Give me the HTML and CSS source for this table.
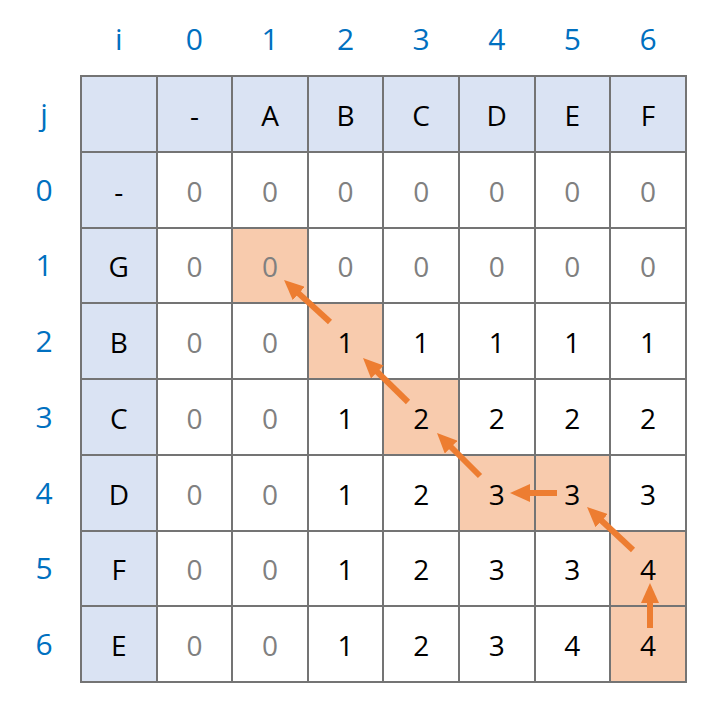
FILE: index.html
```html
<!DOCTYPE html>
<html>
<head>
<meta charset="utf-8">
<link rel="stylesheet" href="styles.css">
</head>
<body>
<div class="page">
  <div class="corner"></div>
  <div class="top-labels">
    <span>i</span><span>0</span><span>1</span><span>2</span><span>3</span><span>4</span><span>5</span><span>6</span>
  </div>
  <div class="left-labels">
    <span>j</span><span>0</span><span>1</span><span>2</span><span>3</span><span>4</span><span>5</span><span>6</span>
  </div>
  <div class="table">
    <div class="c h"></div><div class="c h">-</div><div class="c h">A</div><div class="c h">B</div><div class="c h">C</div><div class="c h">D</div><div class="c h">E</div><div class="c h">F</div>

    <div class="c h">-</div><div class="c g">0</div><div class="c g">0</div><div class="c g">0</div><div class="c g">0</div><div class="c g">0</div><div class="c g">0</div><div class="c g">0</div>

    <div class="c h">G</div><div class="c g">0</div><div class="c g p">0</div><div class="c g">0</div><div class="c g">0</div><div class="c g">0</div><div class="c g">0</div><div class="c g">0</div>

    <div class="c h">B</div><div class="c g">0</div><div class="c g">0</div><div class="c p">1</div><div class="c">1</div><div class="c">1</div><div class="c">1</div><div class="c">1</div>

    <div class="c h">C</div><div class="c g">0</div><div class="c g">0</div><div class="c">1</div><div class="c p">2</div><div class="c">2</div><div class="c">2</div><div class="c">2</div>

    <div class="c h">D</div><div class="c g">0</div><div class="c g">0</div><div class="c">1</div><div class="c">2</div><div class="c p">3</div><div class="c p">3</div><div class="c">3</div>

    <div class="c h">F</div><div class="c g">0</div><div class="c g">0</div><div class="c">1</div><div class="c">2</div><div class="c">3</div><div class="c">3</div><div class="c p">4</div>

    <div class="c h">E</div><div class="c g">0</div><div class="c g">0</div><div class="c">1</div><div class="c">2</div><div class="c">3</div><div class="c">4</div><div class="c p">4</div>
  </div>
</div>
<svg class="arrows" width="714" height="706" viewBox="0 0 714 706">
  <defs>
    <marker id="head" viewBox="0 0 20 18" markerWidth="20" markerHeight="18" markerUnits="userSpaceOnUse" refX="8" refY="9" orient="auto">
      <path d="M0,0 L20,9 L0,18 z" fill="#ed7d31"/>
    </marker>
  </defs>
  <g stroke="#ed7d31" stroke-width="6" marker-end="url(#head)">
    <line x1="330" y1="322" x2="292.9" y2="288.1"/>
    <line x1="408" y1="402" x2="371.6" y2="366.4"/>
    <line x1="480" y1="476" x2="445.5" y2="441.5"/>
    <line x1="557" y1="493" x2="522" y2="493"/>
    <line x1="633" y1="550" x2="595.8" y2="515.2"/>
    <line x1="650" y1="628" x2="650" y2="595"/>
  </g>
</svg>
</body>
</html>
```

FILE: styles.css
```css
html, body {
  margin: 0;
  padding: 0;
  background: #ffffff;
}
body {
  margin: 8px;
  font-family: "Open Sans", "Noto Sans", sans-serif;
}
.page {
  display: grid;
  grid-template-columns: 72px auto;
  grid-template-rows: 67px auto;
  width: 679px;
}
.top-labels {
  display: grid;
  grid-template-columns: repeat(8, 73.6px);
  column-gap: 2px;
  padding: 0 2px 6px;
  align-items: center;
  justify-items: center;
  color: #0070c0;
  font-size: 30px;
  line-height: 1;
}
.left-labels {
  display: grid;
  grid-template-rows: repeat(8, 73.75px);
  row-gap: 2px;
  padding: 2px 0;
  align-items: center;
  justify-items: center;
  color: #0070c0;
  font-size: 30px;
  line-height: 1;
}
.table {
  display: grid;
  grid-template-columns: repeat(8, 73.6px);
  grid-template-rows: repeat(8, 73.75px);
  gap: 2px;
  padding: 2px;
  background: #747474;
  width: fit-content;
}
.c {
  background: #ffffff;
  display: flex;
  align-items: center;
  justify-content: center;
  font-size: 28px;
  color: #000000;
  line-height: 1;
  padding-top: 2px;
}
.c.h {
  background: #dae3f3;
}
.c.g {
  color: #808080;
}
.c.p {
  background: #f8cbad;
}
.arrows {
  position: absolute;
  left: 0;
  top: 0;
  pointer-events: none;
}
```
